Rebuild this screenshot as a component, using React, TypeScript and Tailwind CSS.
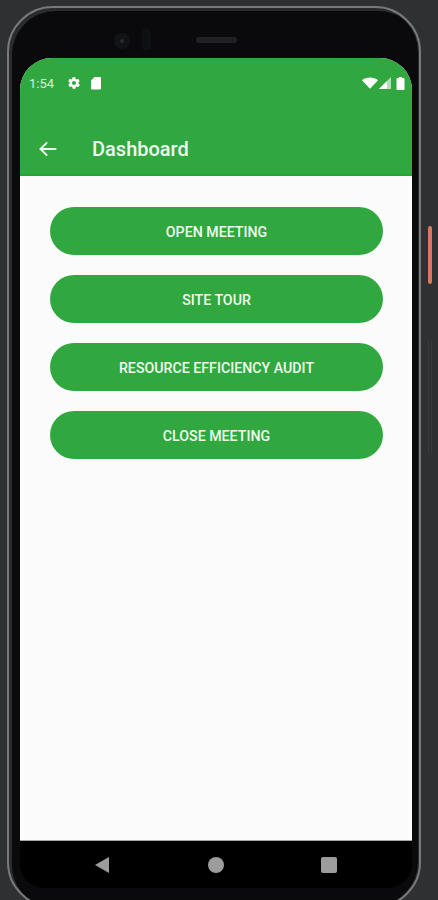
import React, { FC } from "react";

const GREEN = "bg-[#31a83f]";

const buttons = ["OPEN MEETING", "SITE TOUR", "RESOURCE EFFICIENCY AUDIT", "CLOSE MEETING"];

const StatusBar: FC = () => (
  <div className="flex h-[50px] items-center justify-between pl-[9px] pr-[7px]">
    <div className="flex items-center">
      <span className="w-[36px] text-[13px] leading-none text-[#d8efdb]">1:54</span>
      <svg width="14" height="14" viewBox="0 0 24 24" fill="#fff" className="ml-[2px]">
        <path d="M19.4 13c.1-.3.1-.7.1-1s0-.7-.1-1l2.100-1.600c.2-.2.2-.4.1-.6l-2-3.500c-.1-.2-.4-.3-.6-.2l-2.500 1c-.5-.4-1.100-.7-1.700-1l-.4-2.600c0-.3-.2-.5-.5-.5h-4c-.3 0-.5.2-.5.4l-.4 2.700c-.6.2-1.200.6-1.700 1l-2.500-1c-.2-.1-.5 0-.6.2l-2 3.500c-.1.200-.1.500.1.600L4.600 11c-.1.300-.1.700-.1 1s0 .7.1 1l-2.100 1.600c-.2.200-.2.400-.1.600l2 3.500c.1.200.4.300.6.200l2.500-1c.5.400 1.100.700 1.700 1l.4 2.600c0 .3.2.5.5.5h4c.3 0 .5-.2.5-.4l.4-2.700c.6-.2 1.200-.6 1.700-1l2.500 1c.2.100.5 0 .6-.2l2-3.500c.1-.2.1-.5-.1-.6L19.400 13zM12 15.500a3.500 3.500 0 1 1 0-7 3.500 3.500 0 0 1 0 7z" />
      </svg>
      <svg width="12" height="14" viewBox="0 0 12 14" fill="#fff" className="ml-[9px]">
        <path d="M4.500 1H10a1 1 0 0 1 1 1v10.500a1 1 0 0 1-1 1H2a1 1 0 0 1-1-1V4.500z" />
      </svg>
    </div>
    <div className="flex items-center">
      <svg width="16" height="12" viewBox="0 0 16 12" fill="#fff">
        <path d="M0 3.200C2 1.300 4.800.5 8 .5s6 .8 8 2.700L8 11.800z" />
      </svg>
      <svg width="13" height="12" viewBox="0 0 13 12" className="ml-[1px]">
        <path d="M0 12 L12 0 V12 Z" fill="#b5dfba" />
        <path d="M0 12 L8 4 V12 Z" fill="#fff" />
      </svg>
      <svg width="9" height="13" viewBox="0 0 9 13" fill="#fff" className="ml-[4px]">
        <path d="M3 0h3v1h1.500a1 1 0 0 1 1 1v10a1 1 0 0 1-1 1h-6a1 1 0 0 1-1-1V2a1 1 0 0 1 1-1H3z" />
      </svg>
    </div>
  </div>
);

const App: FC = () => {
  return (
    <div className="relative h-[900px] w-[438px] overflow-hidden bg-[#2e3032] font-['Roboto',sans-serif]">
      <div className="ml-[7px] mt-[6px] h-[902px] w-[414px] rounded-[46px] border-[2px] border-[#77797b] bg-[#0a0a0c] pl-[11px] pr-[7px] pt-[50px] shadow-[inset_3px_3px_0_#2a2b2d,inset_-1px_0_0_#2a2b2d]">
        <div className="flex h-[782px] w-[392px] flex-col overflow-hidden rounded-t-[32px] bg-[#fbfbfb]">
          <div className={`${GREEN} h-[118px] shrink-0 border-b-[2px] border-b-[#22a733]`}>
            <StatusBar />
            <div className="flex h-[66px] items-center pl-[18px] pt-[16px]">
              <svg width="20" height="20" viewBox="0 0 24 24" fill="none" stroke="#eefaf0" strokeWidth="2.400">
                <path d="M22 12H3M11 4l-8 8 8 8" />
              </svg>
              <span className="ml-[34px] text-[20px] font-medium leading-none text-[#eefaf0]">Dashboard</span>
            </div>
          </div>

          <div className="flex flex-col gap-[20px] pl-[30px] pt-[31px]">
            {buttons.map((label) => (
              <div
                key={label}
                className={`${GREEN} flex h-[48px] w-[333px] items-center justify-center rounded-full pt-[2px] text-[14.200px] font-medium leading-none text-[#eefaf0]`}
              >
                {label}
              </div>
            ))}
          </div>
        </div>

        <div className="flex h-[48px] w-[392px] items-center rounded-b-[24px] border-t border-t-[#a8a8a8] bg-black">
          <svg width="16" height="18" viewBox="0 0 16 18" fill="#9c9c9c" className="ml-[74px]">
            <path d="M15 1v16L1 9z" />
          </svg>
          <div className="ml-[98px] h-[16px] w-[16px] rounded-full bg-[#9c9c9c]" />
          <div className="ml-[97px] h-[16px] w-[16px] rounded-[2px] bg-[#9c9c9c]" />
        </div>
      </div>

      {/* camera and earpiece sit on the top bezel */}
      <div className="absolute left-[114px] top-[33px] h-[16px] w-[16px] rounded-full bg-[#121315]" />
      <div className="absolute left-[120px] top-[39px] h-[4px] w-[4px] rounded-full bg-[#2a2c2f]" />
      <div className="absolute left-[142px] top-[29px] h-[21px] w-[9px] rounded-[2px] bg-[#0f1012]" />
      <div className="absolute left-[196px] top-[37px] h-[6px] w-[41px] rounded-full bg-[#202123]" />

      <div className="absolute left-[428px] top-[226px] h-[58px] w-[4px] rounded-sm bg-[#d9775f]" />
      <div className="absolute left-[428px] top-[341px] h-[112px] w-[4px] border-x border-[#383a3c]" />
    </div>
  );
};

export default App;
